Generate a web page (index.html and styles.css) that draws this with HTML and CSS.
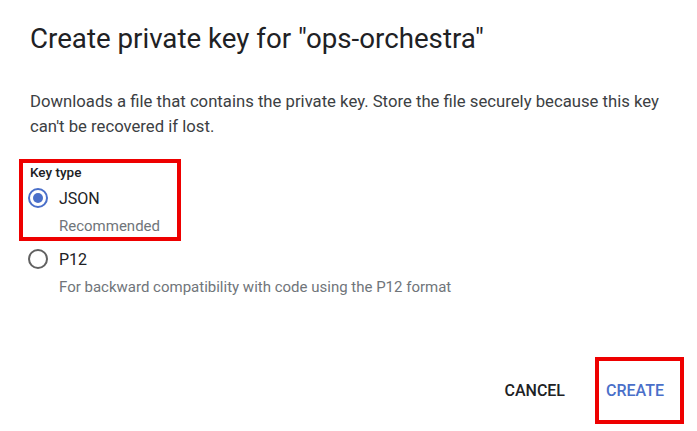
FILE: index.html
```html
<!DOCTYPE html>
<html>
<head>
<meta charset="utf-8">
<link rel="stylesheet" href="styles.css">
</head>
<body>
<div class="dialog">
  <h1 class="title">Create private key for "ops-orchestra"</h1>
  <p class="desc">Downloads a file that contains the private key. Store the file securely because this key can't be recovered if lost.</p>
  <div class="group">
    <div class="highlight">
      <div class="label">Key type</div>
      <div class="option">
        <span class="radio checked"></span>
        <span class="opt-name">JSON</span>
      </div>
      <div class="hint">Recommended</div>
    </div>
    <div class="option second">
      <span class="radio"></span>
      <span class="opt-name">P12</span>
    </div>
    <div class="hint outer">For backward compatibility with code using the P12 format</div>
  </div>
  <div class="actions">
    <button class="btn cancel">CANCEL</button>
    <div class="btn-frame"><button class="btn create">CREATE</button></div>
  </div>
</div>
</body>
</html>
```
FILE: styles.css
```css
html, body {
  margin: 0;
  padding: 0;
  background: #ffffff;
}
body {
  font-family: Roboto, "Liberation Sans", Arial, sans-serif;
  color: #202124;
}
.dialog {
  width: 697px;
  height: 431px;
  box-sizing: border-box;
  padding: 21px 0 0 30px;
  display: flex;
  flex-direction: column;
}
.title {
  margin: 0;
  font-size: 27.7px;
  font-weight: 400;
  line-height: 36px;
  color: #202124;
}
.desc {
  margin: 32px 0 0 0;
  width: 650px;
  font-size: 16.7px;
  line-height: 25px;
  color: #3c4043;
}
.group {
  margin-top: 20px;
  margin-left: -11px;
}
.highlight {
  width: 147px;
  height: 74px;
  border: 4px solid #ee0000;
  padding: 0 0 0 7px;
}
.label {
  font-size: 13.5px;
  font-weight: 500;
  line-height: 18px;
  color: #202124;
}
.option {
  display: flex;
  align-items: center;
  height: 26px;
  margin-top: 4px;
}
.option.second {
  margin-left: 11px;
  margin-top: 5px;
}
.radio {
  width: 16px;
  height: 16px;
  border: 2px solid #616161;
  border-radius: 50%;
  position: relative;
  flex: none;
  margin-left: -2px;
}
.radio.checked {
  border-color: #4a6fc9;
}
.radio.checked::after {
  content: "";
  position: absolute;
  left: 3px;
  top: 3px;
  width: 10px;
  height: 10px;
  border-radius: 50%;
  background: #4a6fc9;
}
.opt-name {
  margin-left: 11px;
  font-size: 16px;
  color: #202124;
}
.hint {
  margin-top: 4px;
  margin-left: 29px;
  font-size: 15px;
  line-height: 22px;
  color: #70757a;
}
.hint.outer {
  margin-left: 40px;
}
.actions {
  margin-top: auto;
  margin-bottom: 7px;
  display: flex;
  justify-content: flex-end;
  align-items: center;
  padding-right: 13px;
}
.btn {
  background: none;
  border: none;
  font-family: Roboto, "Liberation Sans", Arial, sans-serif;
  font-size: 16px;
  font-weight: 500;
  padding: 0;
  cursor: pointer;
}
.cancel {
  color: #202124;
  margin-right: 30px;
}
.btn-frame {
  width: 89px;
  height: 67px;
  box-sizing: border-box;
  border: 4px solid #ee0000;
  padding-left: 7px;
  display: flex;
  align-items: center;
}
.create {
  color: #4a6fc9;
}
```
